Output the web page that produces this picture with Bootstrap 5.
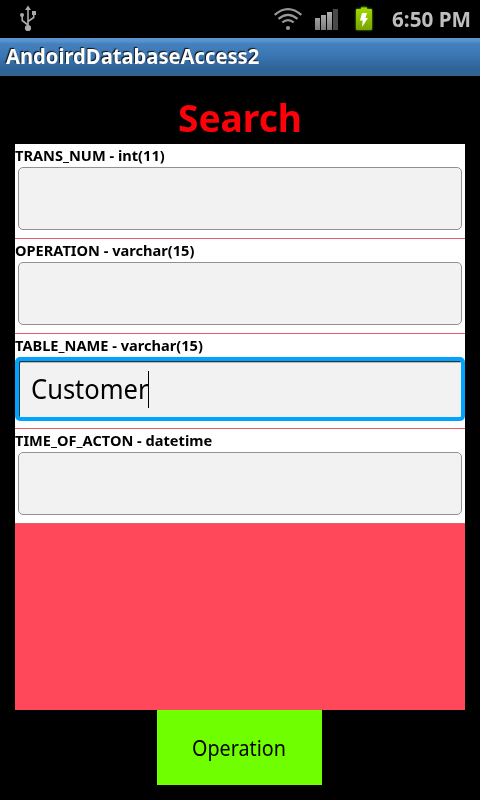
<!DOCTYPE html>
<html lang="en">
<head>
<meta charset="utf-8">
<meta name="viewport" content="width=device-width, initial-scale=1">
<title>AndoirdDatabaseAccess2</title>
<link href="https://cdn.jsdelivr.net/npm/bootstrap@5.3.0/dist/css/bootstrap.min.css" rel="stylesheet">
<style>
body{width:480px;height:800px;background:#000;color:#000;font-family:"Noto Sans","Open Sans",sans-serif;overflow:hidden}
.fit{display:inline-block;white-space:nowrap;transform-origin:0 50%}
.statusbar{height:38px;padding-left:19px}
.clock{width:79px;margin-left:18px;margin-right:9px;font-size:21px;line-height:38px;color:#bebebe}
.clock .fit{transform:scaleX(.985)}
.titlebar{height:38px;padding-left:6px;background:linear-gradient(#5b96d3 0,#5893ce 3px,#4480bd 6px,#3a76b2 18px,#2e6498 30px,#31648f 38px)}
.titlebar .fit{font-size:21px;line-height:36px;color:#fff;text-shadow:-1px -1px 1px #111;transform:scaleX(.961)}
.heading{height:68px;font-size:37.5px;line-height:83px;color:#ff000a;margin:0;padding-left:178px}
.heading .fit{transform:scaleX(.99)}
.fields{margin:0 15px;height:566px;background:#ff4859}
.field{height:95px;background:#fff;border-bottom:1px solid #e0616d}
.field label{height:23px;line-height:22px;font-size:15px}
.field label .fit{transform:scaleX(.973)}
.field .form-control{width:444px;height:63px;margin-left:3px;background:#f2f2f2;border:1px solid #919191;border-radius:5px;box-shadow:none}
.field .active-box{width:450px;height:64px;padding:0 0 0 12px;border:4px solid #00a4ff;border-radius:5px;background:#f2f2f2;box-shadow:inset 1px 1px #333,inset 1px 2px #bbb}
.active-box .fit{width:117px;font-size:27px;line-height:56px;transform:scaleX(.945)}
.caret{width:1px;height:37px;background:#000}
.op{width:165px;height:75px;margin-left:157px;padding:0 0 0 35px;border:0;border-radius:0;background:#70ff00!important;color:#000!important;font-size:21px;line-height:77px}
.op .fit{transform:scaleX(.94)}
</style>
<script src="https://cdn.jsdelivr.net/npm/bootstrap@5.3.0/dist/js/bootstrap.bundle.min.js"></script>
</head>
<body>
<header class="statusbar d-flex align-items-start">
<svg width="18" height="38" viewBox="19 0 18 38" fill="none" stroke="#aaa" stroke-width="1.6"><path d="M28 28V9M28 25l-5.800-4.500V16M28 21.500l5.700-4V13"/><path d="M28 5.500l-3 4.500h6zM32 11h4v4h-4z" fill="#aaa" stroke="none"/><circle cx="22" cy="15" r="2" fill="#aaa" stroke="none"/><circle cx="28" cy="28" r="3.100" fill="#aaa" stroke="none"/></svg>
<svg class="ms-auto" width="104" height="38" viewBox="270 0 104 38">
<defs><linearGradient id="g" x1="0" y1="0" x2="0" y2="1"><stop stop-color="#b2b2b2"/><stop offset="1" stop-color="#7c7c7c"/></linearGradient><linearGradient id="b" x1="0" y1="0" x2="0" y2="1"><stop stop-color="#a3da00"/><stop offset="1" stop-color="#76a500"/></linearGradient><filter id="f" x="-50%" y="-50%" width="200%" height="200%"><feGaussianBlur stdDeviation="1.300"/></filter></defs>
<g fill="none" stroke="#999" stroke-width="2.200"><path d="M274.700 14.800q13.300-11.400 26.600 0M278.500 18.800q9.500-8 19 0M282.300 22.400q5.700-4.500 11.400 0"/></g><circle cx="288" cy="28" r="2.100" fill="#999"/>
<path d="M315 18h5v12h-5zM321 15h5v15h-5zM327 12h5v18h-5z" fill="url(#g)"/><path d="M333 9h5v21h-5z" fill="#484848"/>
<path d="M357 9h4V7h6v2h4q1 0 1 1v19q0 1-1 1h-14q-1 0-1-1V10q0-1 1-1z" fill="#75aa00" filter="url(#f)"/>
<path d="M357 9h4V7.500h6V9h4q1 0 1 1v19q0 1-1 1h-14q-1 0-1-1V10q0-1 1-1z" fill="url(#b)"/><path d="M362 13h5l-1.500 5h2.500l-6 9 .7-6.500h-2.700z" fill="#fff"/></svg>
<div class="clock fw-bold"><span class="fit">6:50 PM</span></div>
</header>
<div class="titlebar fw-bold"><span class="fit">AndoirdDatabaseAccess2</span></div>
<main>
<h1 class="heading fw-bold"><span class="fit">Search</span></h1>
<form class="fields">
<div class="field"><label class="d-block fw-bold" for="trans"><span class="fit">TRANS_NUM - int(11)</span></label><input id="trans" class="form-control"></div>
<div class="field"><label class="d-block fw-bold" for="oper"><span class="fit">OPERATION - varchar(15)</span></label><input id="oper" class="form-control"></div>
<div class="field"><label class="d-block fw-bold"><span class="fit">TABLE_NAME - varchar(15)</span></label><div class="active-box d-flex align-items-center"><span class="fit">Customer</span><i class="caret"></i></div></div>
<div class="field"><label class="d-block fw-bold" for="time"><span class="fit">TIME_OF_ACTON - datetime</span></label><input id="time" class="form-control"></div>
</form>
<button type="button" class="op btn d-block text-start"><span class="fit">Operation</span></button>
</main>
</body>
</html>
